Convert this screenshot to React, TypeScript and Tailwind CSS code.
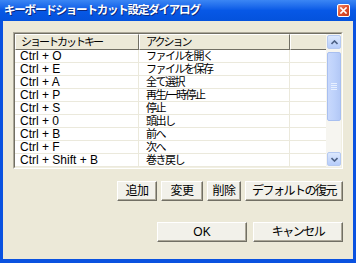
import React from 'react';

const rows: [string, string][] = [
  ['Ctrl + O', 'ファイルを開く'],
  ['Ctrl + E', 'ファイルを保存'],
  ['Ctrl + A', '全て選択'],
  ['Ctrl + P', '再生/一時停止'],
  ['Ctrl + S', '停止'],
  ['Ctrl + 0', '頭出し'],
  ['Ctrl + B', '前へ'],
  ['Ctrl + F', '次へ'],
  ['Ctrl + Shift + B', '巻き戻し'],
];

const XpButton: React.FC<{ label: string; className?: string }> = ({ label, className = '' }) => (
  <button
    className={`h-[20px] flex items-center justify-center bg-[#f2f1ea] border-t border-l border-white border-r border-b border-r-[#716f64] border-b-[#716f64] shadow-[inset_-1px_-1px_0_#aca899] text-[12px] leading-[12px] text-black ${className}`}
  >
    {label}
  </button>
);

const App: React.FC = () => {
  return (
    <div className="w-[356px] h-[263px] flex flex-col bg-[#0a52e0] font-['Liberation_Sans','Noto_Sans_CJK_JP',sans-serif] overflow-hidden">
      {/* Title bar */}
      <div className="h-[21px] flex items-center justify-between pl-[4px] pr-[6px] bg-linear-to-b from-[#3b86f4] via-[#0758e6] to-[#0452dc]">
        <span className="text-white font-bold text-[11.5px] tracking-[-1.2px] [text-shadow:1px_1px_0_#0a2a80]">
          キーボードショートカット設定ダイアログ
        </span>
        <div className="w-[13px] h-[13px] rounded-[2px] border border-white bg-linear-to-br from-[#f08a6a] via-[#e0502c] to-[#c23a1c] flex items-center justify-center">
          <svg width="7" height="7" viewBox="0 0 7 7">
            <path d="M1 1 L6 6 M6 1 L1 6" stroke="white" strokeWidth="1.6" strokeLinecap="square" />
          </svg>
        </div>
      </div>

      {/* Client area */}
      <div className="flex-1 mx-[3px] mb-[4px] bg-[#ece9d8] flex flex-col pt-[11px] px-[10px]">
        {/* List view */}
        <div className="h-[137px] flex border border-t-[#aca899] border-l-[#aca899] border-r-white border-b-white">
          <div className="flex-1 flex border border-t-[#716f64] border-l-[#716f64] border-r-[#f1efe2] border-b-[#f1efe2] bg-white">
            <div className="flex-1 flex flex-col overflow-hidden">
              {/* Header */}
              <div className="h-[16px] flex shrink-0 bg-[#ece9d8] text-[11px] text-black">
                <div className="w-[124px] border-t border-l border-white border-r border-b border-r-[#716f64] border-b-[#716f64] pl-[5px] leading-[14px] tracking-[-2px]">
                  ショートカットキー
                </div>
                <div className="w-[151px] border-t border-l border-white border-r border-b border-r-[#716f64] border-b-[#716f64] pl-[6px] leading-[14px] tracking-[-2px]">
                  アクション
                </div>
                <div className="flex-1 border-t border-l border-white border-b border-b-[#716f64]" />
              </div>
              {rows.map(([k, a], i) => (
                <div key={i} className="h-[13px] flex shrink-0 border-b border-[#ebe9dc] text-black">
                  <div className="w-[124px] border-r border-[#ebe9dc] pl-[5px] text-[12px] leading-[13px]">{k}</div>
                  <div className="w-[151px] border-r border-[#ebe9dc] pl-[7px] text-[11px] leading-[13px] tracking-[-1.5px]">{a}</div>
                  <div className="flex-1" />
                </div>
              ))}
            </div>
            {/* Scrollbar */}
            <div className="w-[15px] flex flex-col bg-[#f6f5f0] py-[1px] pl-[1px]">
              <div className="h-[14px] rounded-[2px] bg-linear-to-b from-[#dce8fd] to-[#b7cdfa] border border-[#b5c9f1] flex items-center justify-center">
                <svg width="7" height="5" viewBox="0 0 7 5">
                  <path d="M0.5 4 L3.5 1 L6.5 4" stroke="#4d6185" strokeWidth="1.6" fill="none" />
                </svg>
              </div>
              <div className="mt-[3px] h-[69px] rounded-[2px] bg-linear-to-r from-[#c8d8fc] via-[#bed2fb] to-[#b3c8f6] border border-[#a8bff0] flex flex-col items-center justify-center gap-[1px]">
                <div className="w-[6px] h-px bg-[#e8f0ff]" />
                <div className="w-[6px] h-px bg-[#e8f0ff]" />
                <div className="w-[6px] h-px bg-[#e8f0ff]" />
                <div className="w-[6px] h-px bg-[#e8f0ff]" />
              </div>
              <div className="flex-1" />
              <div className="h-[14px] rounded-[2px] bg-linear-to-b from-[#dce8fd] to-[#b7cdfa] border border-[#b5c9f1] flex items-center justify-center">
                <svg width="7" height="5" viewBox="0 0 7 5">
                  <path d="M0.5 1 L3.5 4 L6.5 1" stroke="#4d6185" strokeWidth="1.6" fill="none" />
                </svg>
              </div>
            </div>
          </div>
        </div>

        {/* Action buttons */}
        <div className="mt-[12px] flex justify-end gap-[4px]">
          <XpButton label="追加" className="w-[40px] tracking-[-0.5px]" />
          <XpButton label="変更" className="w-[42px] tracking-[-0.5px]" />
          <XpButton label="削除" className="w-[34px] tracking-[-0.5px]" />
          <XpButton label="デフォルトの復元" className="w-[98px] tracking-[-1.5px]" />
        </div>

        {/* OK / Cancel */}
        <div className="mt-[21px] flex justify-end gap-[6px]">
          <XpButton label="OK" className="w-[90px]" />
          <XpButton label="キャンセル" className="w-[90px] tracking-[-1.5px]" />
        </div>
      </div>
    </div>
  );
};

export default App;
